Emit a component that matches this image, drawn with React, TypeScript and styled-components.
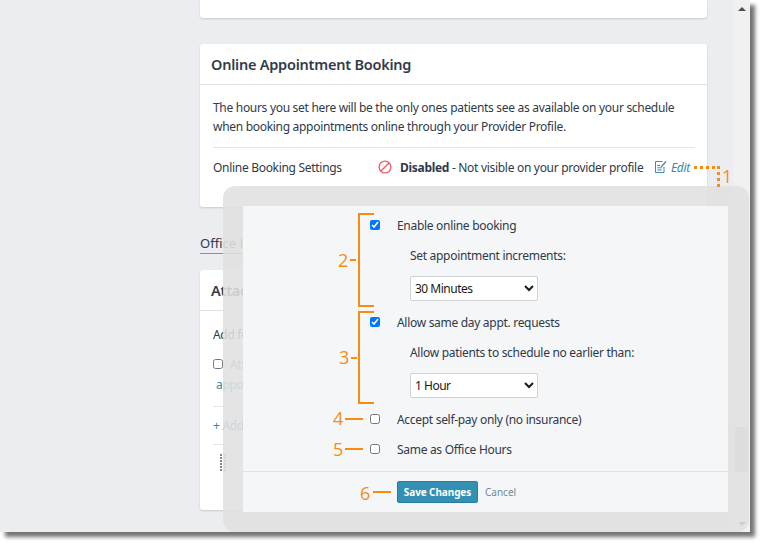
import styled, { createGlobalStyle } from "styled-components";

const orange = "#f68d12";

const GlobalStyle = createGlobalStyle`
  html, body {
    margin: 0;
    padding: 0;
    background: #fff;
  }
  body {
    width: 765px;
    height: 547px;
    overflow: hidden;
    font-family: "Noto Sans", "Liberation Sans", sans-serif;
    font-size: 12px;
    letter-spacing: -0.3px;
    color: #2f3a4a;
  }
`;

function BanIcon() {
  return (
    <svg width="14" height="14" viewBox="0 0 14 14" fill="none" stroke="#f0606a" strokeWidth="1.4">
      <circle cx="7" cy="7" r="5.9" />
      <path d="M2.9 11.1 11.1 2.9" />
    </svg>
  );
}

function EditIcon() {
  return (
    <svg width="13" height="14" viewBox="0 0 13 14" fill="none" stroke="#3f88b0" strokeWidth="1">
      <path d="M8.5 1.5H1.5v11h8.500V7" />
      <path d="M3.200 5.500h3M3.200 7.800h4.500M3.200 10h4.500" />
      <path d="M6.500 6.500 11.500 1l1 1-5 5.300z" fill="#3f88b0" stroke="none" />
    </svg>
  );
}

function GripIcon() {
  return (
    <svg width="6" height="17" viewBox="0 0 6 17" fill="#7f8896">
      {[0, 3, 6, 9, 12, 15].map((y) => (
        <g key={y}>
          <rect x="0" y={y} width="2" height="2" />
          <rect x="4" y={y} width="2" height="2" />
        </g>
      ))}
    </svg>
  );
}

export default function App() {
  return (
    <>
      <GlobalStyle />
      <Frame>
        <Page>
          <CardStub />
          <Card $height={163}>
            <CardHeader>Online Appointment Booking</CardHeader>
            <CardBody>
              <Intro>
                The hours you set here will be the only ones patients see as available on your schedule
                when booking appointments online through your Provider Profile.
              </Intro>
              <SettingsRow>
                <SettingsLabel>Online Booking Settings</SettingsLabel>
                <BanIcon />
                <Status>
                  <strong>Disabled</strong> - Not visible on your provider profile
                </Status>
                <EditLink>
                  <EditIcon />
                  <em>Edit</em>
                </EditLink>
              </SettingsRow>
            </CardBody>
          </Card>
          <TabBar>
            <Tab>Office Hours</Tab>
          </TabBar>
          <Card $height={240}>
            <CardHeader>Attachments</CardHeader>
            <AttachBody>
              <Muted>Add forms</Muted>
              <AttachOption>
                <input type="checkbox" readOnly />
                <span>Attach</span>
              </AttachOption>
              <AttachLink>appointment</AttachLink>
              <AttachDivider />
              <AddLink>+ Add</AddLink>
              <AttachDivider />
              <GripRow>
                <GripIcon />
              </GripRow>
            </AttachBody>
          </Card>
        </Page>
        <Scrollbar>
          <ArrowUp />
          <ScrollTrack>
            <ScrollThumb />
          </ScrollTrack>
          <ArrowDown />
        </Scrollbar>

        <Modal>
          <ModalPanel>
            <ModalBody>
              <CheckRow>
                <input type="checkbox" checked readOnly />
                <span>Enable online booking</span>
              </CheckRow>
              <SubLabel>Set appointment increments:</SubLabel>
              <Select defaultValue="30">
                <option value="30">30 Minutes</option>
              </Select>
              <CheckRow $gap={12}>
                <input type="checkbox" checked readOnly />
                <span>Allow same day appt. requests</span>
              </CheckRow>
              <SubLabel>Allow patients to schedule no earlier than:</SubLabel>
              <Select defaultValue="1">
                <option value="1">1 Hour</option>
              </Select>
              <CheckRow $gap={12}>
                <input type="checkbox" readOnly />
                <span>Accept self-pay only (no insurance)</span>
              </CheckRow>
              <CheckRow $gap={10}>
                <input type="checkbox" readOnly />
                <span>Same as Office Hours</span>
              </CheckRow>
            </ModalBody>
            <ModalFooter>
              <SaveButton>Save Changes</SaveButton>
              <CancelLink>Cancel</CancelLink>
            </ModalFooter>
          </ModalPanel>
        </Modal>

        <DottedH />
        <DottedV />
        <Callout $x={722} $y={165}>1</Callout>
        <Bracket $top={213} $height={94} />
        <Bracket $top={311} $height={93} />
        <Callout $x={338} $y={249}>2</Callout>
        <Tick $x={350} $y={259} $width={6} />
        <Callout $x={339} $y={346}>3</Callout>
        <Tick $x={351} $y={357} $width={6} />
        <Callout $x={333} $y={407}>4</Callout>
        <Tick $x={345} $y={418} $width={18} />
        <Callout $x={333} $y={438}>5</Callout>
        <Tick $x={345} $y={448} $width={18} />
        <Callout $x={360} $y={482}>6</Callout>
        <Tick $x={373} $y={491} $width={18} />
      </Frame>
    </>
  );
}

const Frame = styled.div`
  position: relative;
  display: flex;
  width: 750px;
  height: 532px;
  background: #ecedf0;
  box-shadow: 5px 5px 4px rgba(0, 0, 0, 0.55);
  overflow: visible;
`;

const Page = styled.main`
  width: 733px;
  box-sizing: border-box;
  padding-left: 200px;
  padding-right: 26px;
`;

const CardStub = styled.div`
  height: 18px;
  margin-bottom: 26px;
  background: #fff;
  border-radius: 0 0 3px 3px;
  box-shadow: 0 1px 2px rgba(0, 0, 0, 0.15);
`;

const Card = styled.section<{ $height: number }>`
  height: ${(p) => p.$height}px;
  background: #fff;
  border-radius: 3px;
  box-shadow: 0 1px 2px rgba(0, 0, 0, 0.15);
`;

const CardHeader = styled.h2`
  margin: 0;
  height: 40px;
  padding: 0 11px;
  border-bottom: 1px solid #dfe1e6;
  font-size: 14.5px;
  font-weight: 600;
  letter-spacing: -0.23px;
  line-height: 40px;
  color: #333b48;
`;

const CardBody = styled.div`
  padding: 13px 12px 0 13px;
`;

const Intro = styled.p`
  margin: 0;
  padding-bottom: 11px;
  border-bottom: 1px solid #e4e6ea;
  line-height: 19px;
`;

const SettingsRow = styled.div`
  display: flex;
  align-items: center;
  height: 38px;
`;

const SettingsLabel = styled.span`
  width: 165px;
`;

const Status = styled.span`
  margin-left: 8px;
  width: 254px;
  white-space: nowrap;

  strong {
    font-weight: 700;
  }
`;

const EditLink = styled.span`
  display: flex;
  align-items: center;
  gap: 4px;
  color: #3a87ad;
`;

const TabBar = styled.div`
  height: 63px;
  box-sizing: border-box;
  padding-top: 27px;
`;

const Tab = styled.div`
  display: inline-block;
  height: 19px;
  border-bottom: 1px solid #8a8f98;
  font-size: 13px;
  letter-spacing: 0;
  line-height: 19px;
  color: #2f3a4a;
`;

const AttachBody = styled.div`
  padding: 14px 13px 0;
`;

const Muted = styled.div`
  line-height: 19px;
`;

const AttachOption = styled.label`
  display: flex;
  align-items: center;
  gap: 7px;
  margin-top: 11px;
  line-height: 19px;
  color: #3a87ad;

  input {
    margin: 0 0 2px;
    width: 10px;
    height: 10px;
  }
`;

const AttachLink = styled.div`
  margin-top: 1px;
  padding-left: 3px;
  line-height: 19px;
  color: #3a87ad;
`;

const AttachDivider = styled.div`
  height: 1px;
  margin-top: 12px;
  background: #e4e6ea;
`;

const AddLink = styled.div`
  margin-top: 9px;
  height: 7px;
  padding-bottom: 9px;
  line-height: 19px;
  color: #3a87ad;
`;

const GripRow = styled.div`
  padding: 9px 0 0 7px;
`;

const Scrollbar = styled.aside`
  display: flex;
  flex-direction: column;
  align-items: center;
  width: 17px;
  background: #f1f1f1;
`;

const ArrowUp = styled.div`
  margin-top: 7px;
  border: 4px solid transparent;
  border-top: 0;
  border-bottom: 4px solid #505050;
`;

const ScrollTrack = styled.div`
  flex: 1;
  width: 100%;
  padding-top: 416px;
  box-sizing: border-box;
`;

const ScrollThumb = styled.div`
  height: 45px;
  margin: 0 2px;
  background: #c4c4c4;
`;

const ArrowDown = styled.div`
  margin-bottom: 6px;
  border: 4px solid transparent;
  border-bottom: 0;
  border-top: 4px solid #505050;
`;

const Modal = styled.div`
  position: absolute;
  left: 223px;
  top: 186px;
  width: 526px;
  height: 346px;
  box-sizing: border-box;
  padding: 20px 21px 20px 20px;
  border-radius: 12px;
  background: rgba(224, 224, 224, 0.88);
`;

const ModalPanel = styled.div`
  display: flex;
  flex-direction: column;
  height: 100%;
  background: #f5f6f8;
`;

const ModalBody = styled.div`
  flex: 1;
  padding: 10px 0 0 127px;
  display: flex;
  flex-direction: column;
  align-items: flex-start;
`;

const CheckRow = styled.label<{ $gap?: number }>`
  display: flex;
  align-items: center;
  height: 20px;
  margin-top: ${(p) => p.$gap ?? 0}px;
  line-height: 20px;

  input {
    margin: 0 17px 2px 0;
    width: 10px;
    height: 10px;
  }
`;

const SubLabel = styled.div`
  margin: 10px 0 10px 40px;
  height: 20px;
  line-height: 20px;
`;

const Select = styled.select`
  width: 128px;
  height: 25px;
  margin-left: 40px;
  padding: 0;
  border: 1px solid #cfd2d6;
  border-radius: 2px;
  background: #fff;
  font-family: inherit;
  font-size: 12px;
  letter-spacing: -0.5px;
  color: #1a1a1a;
`;

const ModalFooter = styled.div`
  display: flex;
  align-items: center;
  gap: 7px;
  height: 40px;
  padding-left: 154px;
  border-top: 1px solid #e0e2e5;
`;

const SaveButton = styled.button`
  width: 81px;
  height: 22px;
  padding: 0;
  border: 1px solid #2a7d9e;
  border-radius: 2px;
  background: #348fb4;
  font-family: inherit;
  font-size: 10px;
  font-weight: 700;
  letter-spacing: -0.1px;
  color: #fff;
`;

const CancelLink = styled.span`
  font-size: 10px;
  letter-spacing: 0;
  color: #6f8a9b;
`;

const DottedH = styled.div`
  position: absolute;
  left: 694px;
  top: 166px;
  width: 23px;
  height: 3px;
  background: repeating-linear-gradient(to right, ${orange} 0 3px, transparent 3px 6px);
`;

const DottedV = styled.div`
  position: absolute;
  left: 717px;
  top: 166px;
  width: 3px;
  height: 21px;
  background: repeating-linear-gradient(to bottom, ${orange} 0 3px, transparent 3px 6px);
`;

const Callout = styled.span<{ $x: number; $y: number }>`
  position: absolute;
  left: ${(p) => p.$x}px;
  top: ${(p) => p.$y}px;
  font-family: "Open Sans", sans-serif;
  font-size: 18px;
  font-weight: 400;
  letter-spacing: 0;
  line-height: 22px;
  color: ${orange};
`;

const Bracket = styled.div<{ $top: number; $height: number }>`
  position: absolute;
  left: 358px;
  top: ${(p) => p.$top}px;
  width: 16px;
  height: ${(p) => p.$height}px;
  box-sizing: border-box;
  border: 2px solid ${orange};
  border-right: 0;
`;

const Tick = styled.div<{ $x: number; $y: number; $width: number }>`
  position: absolute;
  left: ${(p) => p.$x}px;
  top: ${(p) => p.$y}px;
  width: ${(p) => p.$width}px;
  height: 2px;
  background: ${orange};
`;
